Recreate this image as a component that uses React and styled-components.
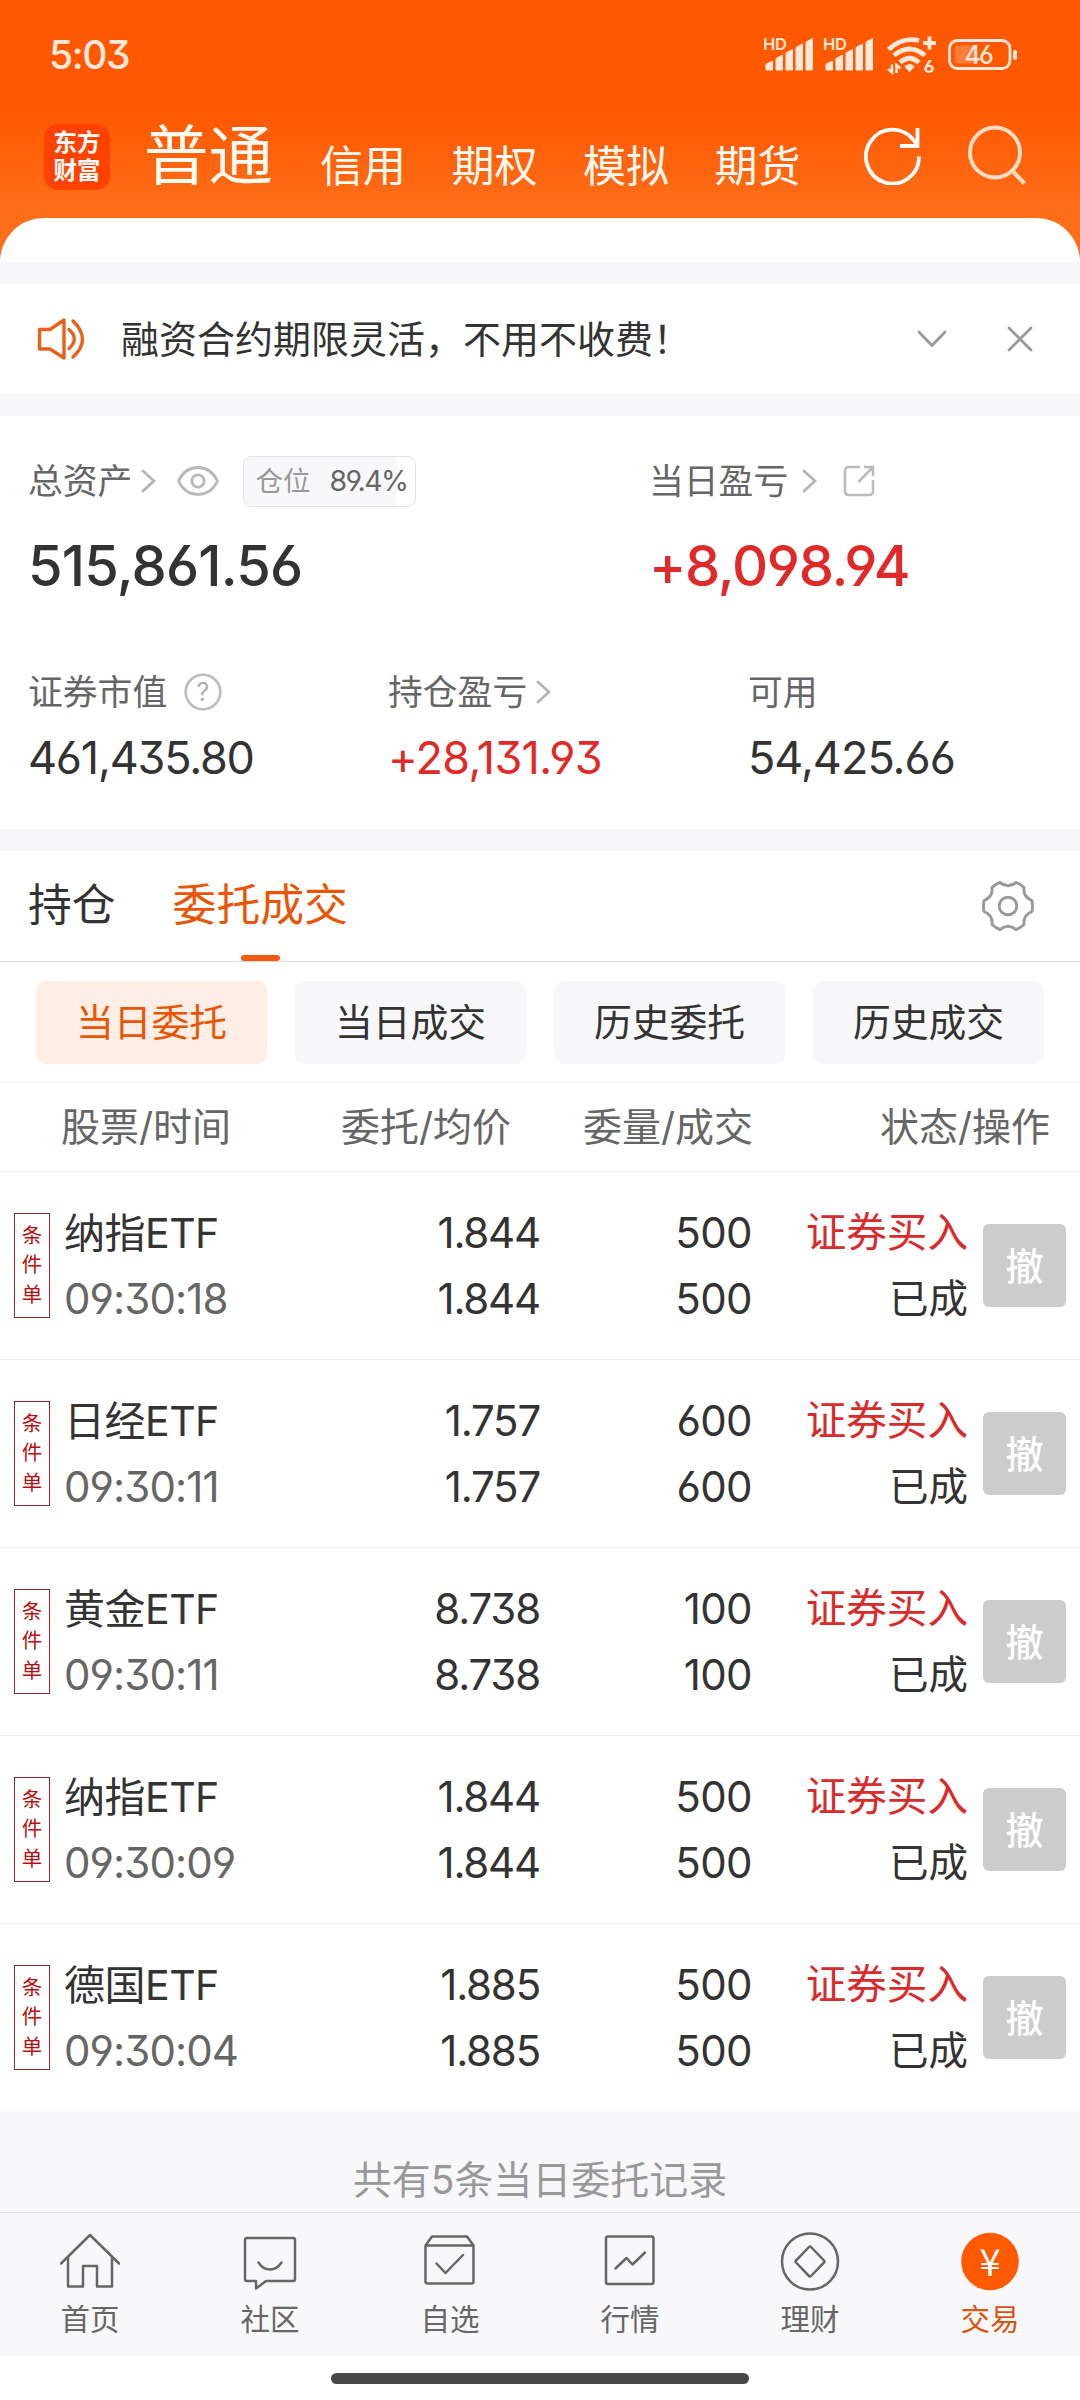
import styled, { createGlobalStyle } from "styled-components";

const GlobalStyle = createGlobalStyle`
    * {
        box-sizing: border-box;
    }
    body {
        margin: 0;
        background: #fff;
        color: #333;
        font-family: Inter, "Noto Sans CJK SC", sans-serif;
        font-feature-settings: "cv03", "cv04", "cv09";
    }
    svg {
        display: block;
        flex: none;
    }
`

const Screen = styled.div`
    width: 1080px;
    height: 2400px;
    display: flex;
    flex-direction: column;
    overflow: hidden;
    background: #f8f8fb;
`

const Header = styled.header`
    height: 262px;
    flex: none;
    display: flex;
    flex-direction: column;
    background: linear-gradient(#ff5800 0, #ff5800 110px, #ff6d18 205px, #ff7019 262px);
`

const StatusBar = styled.div`
    height: 110px;
    padding: 0 63px 0 49px;
    display: flex;
    align-items: center;
    justify-content: space-between;
    color: #ffe8d9;
`

const Clock = styled.span`
    font-size: 39px;
    font-weight: 500;
    line-height: 48px;
    letter-spacing: -1.4px;
`

const AccountBar = styled.nav`
    height: 108px;
    padding: 0 53px 0 44px;
    display: flex;
    align-items: center;
    color: #fffaf2;
`

const Logo = styled.div`
    width: 66px;
    height: 66px;
    margin: -15px 34px 0 0;
    display: flex;
    flex-direction: column;
    align-items: center;
    justify-content: center;
    border-radius: 14px;
    background: #ff4200;
    color: #fff;
    font-family: "Noto Sans CJK SC", sans-serif;
    font-size: 23.5px;
    font-weight: 700;
`

const LogoLine = styled.span`
    height: 28px;
    line-height: 25px;
`

const Account = styled.span`
    width: ${p => p.$active ? "176px" : "131.5px"};
    margin-top: ${p => p.$active ? "-17px" : "4px"};
    font-size: ${p => p.$active ? "64.5px" : "43px"};
    line-height: 70px;
    white-space: nowrap;
`

const AccountActions = styled.div`
    display: flex;
    gap: 46px;
    margin: -18px 0 0 auto;
`

const Sheet = styled.div`
    height: 44px;
    border-radius: 44px 44px 0 0;
    background: #fff;
`

const Notice = styled.section`
    height: 110px;
    flex: none;
    margin: 22px 0;
    padding: 0 47px 0 36px;
    display: flex;
    align-items: center;
    background: #fff;
`

const NoticeText = styled.p`
    flex: 1;
    margin: 0 0 0 35px;
    font-size: 38px;
    line-height: 50px;
`

const NoticeActions = styled.div`
    display: flex;
    align-items: center;
    gap: 60px;
`

const Assets = styled.section`
    height: 413px;
    flex: none;
    padding: 37px 28px 0;
    background: #fff;
`

const AssetRow = styled.div`
    display: grid;
    grid-template-columns: ${p => p.$columns};
    height: ${p => p.$height}px;
`

const AssetLabel = styled.div`
    height: 56px;
    display: flex;
    align-items: center;
    color: #666;
    font-size: 34.8px;
    line-height: 50px;
    & > svg {
        margin-left: ${p => p.$iconGap || 9}px;
    }
`

const AssetValue = styled.div`
    margin-top: ${p => p.$large ? "22px" : "3px"};
    color: ${p => p.$up ? "#e02a2a" : "#333"};
    font-size: ${p => p.$large ? "56px" : "45px"};
    font-weight: ${p => p.$large ? 500 : 400};
    line-height: 70px;
    letter-spacing: ${p => p.$spacing || 0}px;
    white-space: nowrap;
`

const PositionBadge = styled.div`
    width: 173px;
    height: 51px;
    margin-left: 24px;
    padding: 0 8px 0 11px;
    display: flex;
    align-items: center;
    justify-content: space-between;
    border: 1px solid #e3e4e6;
    border-radius: 8px;
    background: linear-gradient(90deg, #f8f8fb 89.4%, #fff 89.4%);
    font-size: 28.5px;
    letter-spacing: -1.6px;
    & > span:first-child {
        color: #999;
        font-size: 27.5px;
        letter-spacing: 0;
    }
`

const Tabs = styled.div`
    height: 111px;
    flex: none;
    margin-top: 22px;
    padding: 0 46px 0 28px;
    display: flex;
    align-items: stretch;
    border-bottom: 1px solid #dedede;
    background: #fff;
    & > svg {
        margin: 29px 0 0 auto;
    }
`

const Tab = styled.div`
    display: flex;
    flex-direction: column;
    align-items: center;
    justify-content: space-between;
    margin-right: 57px;
    padding-top: 26px;
    color: ${p => p.$active ? "#ea5504" : "#333"};
    font-size: 43.8px;
    line-height: 58px;
    &::after {
        content: "";
        width: 39px;
        height: 6px;
        border-radius: 3px;
        background: ${p => p.$active ? "#f25a10" : "transparent"};
    }
`

const Chips = styled.div`
    height: 121px;
    flex: none;
    padding: 19px 36px 0;
    display: grid;
    grid-template-columns: repeat(4, 231px);
    column-gap: 28px;
    border-bottom: 1px solid #f3f3f5;
    background: #fff;
`

const Chip = styled.div`
    height: 83px;
    border-radius: 10px;
    background: ${p => p.$active ? "#ffeee6" : "#f8f8fb"};
    color: ${p => p.$active ? "#ea5504" : "#333"};
    font-size: 37.8px;
    line-height: 82px;
    text-align: center;
`

const TableHead = styled.div`
    height: 89px;
    flex: none;
    padding-left: 61px;
    display: grid;
    grid-template-columns: 211px 239px 242px 297px;
    border-bottom: 1px solid #ececec;
    background: #fff;
    color: #666;
    font-size: 39px;
    line-height: 88px;
    text-align: right;
    & > span:first-child {
        text-align: left;
    }
`

const OrderRow = styled.div`
    height: ${p => p.$last ? "187px" : "188px"};
    flex: none;
    padding-left: 14px;
    display: grid;
    grid-template-columns: 50px 236px 240px 212px 216px 83px;
    align-items: center;
    border-bottom: ${p => p.$last ? "0" : "1px solid #ececec"};
    background: #fff;
`

const ConditionTag = styled.div`
    width: 36px;
    height: 105px;
    padding-bottom: 1px;
    display: flex;
    flex-direction: column;
    align-items: center;
    justify-content: center;
    border: 1px solid #8c2b2b;
    color: #b80d0d;
    font-size: 20.5px;
    line-height: 29.3px;
`

const Cell = styled.div`
    font-size: 42px;
    line-height: 66px;
    text-align: ${p => p.$left ? "left" : "right"};
    white-space: nowrap;
`

const StockName = styled.div`
    font-size: 41px;
    letter-spacing: -0.5px;
`

const OrderTime = styled.div`
    color: #666;
    letter-spacing: -0.9px;
`

const Price = styled.div`
    letter-spacing: -1.2px;
`

const Amount = styled.div`
    letter-spacing: -0.6px;
`

const Side = styled.div`
    color: #d92b2b;
    font-size: 40.6px;
`

const Status = styled.div`
    font-size: 39.5px;
`

const CancelButton = styled.button`
    width: 83px;
    height: 83px;
    margin-left: 15px;
    padding: 0 0 4px;
    border: 0;
    border-radius: 6px;
    background: #ccc;
    color: #fff;
    font: inherit;
    font-size: 38px;
    font-weight: 500;
`

const Summary = styled.div`
    height: 101px;
    flex: none;
    padding-top: 43px;
    color: #999;
    font-size: 39px;
    line-height: 52px;
    text-align: center;
`

const TabBar = styled.nav`
    height: 144px;
    flex: none;
    display: grid;
    grid-template-columns: repeat(6, 1fr);
    border-top: 1px solid #dfe0e2;
`

const TabBarItem = styled.div`
    display: flex;
    flex-direction: column;
    align-items: center;
    padding-top: 18px;
    color: ${p => p.$active ? "#d95410" : "#666"};
    font-size: 29.5px;
    line-height: 40px;
    & > svg {
        margin-bottom: 8px;
    }
`

const GestureArea = styled.div`
    flex: 1;
    display: flex;
    justify-content: center;
    padding-top: 17px;
    background: #fff;
    &::after {
        content: "";
        width: 418px;
        height: 11px;
        border-radius: 6px;
        background: #474747;
    }
`

const Signal = ({ x }) => (
    <g transform={`translate(${x} 0)`}>
        <text x="-1" y="20" fontSize="16.5" fontWeight="600" letterSpacing="-0.3">HD</text>
        <path d="M2 40v-5q0-1 1-1.4l5.500-2.400V40zM12 40V28.500l6.500-3.500V40zM22 40V23l6.500-3.500V40zM32 40V17.500l6.500-3.500V40zM42 40V12l6.500-3.500V40z"
            stroke="currentColor" strokeWidth="1" strokeLinejoin="round" />
    </g>
)

const StatusIcons = () => (
    <svg width="253" height="50" viewBox="0 0 253 50" fill="currentColor">
        <Signal x={0} />
        <Signal x={60} />
        <g fill="none" stroke="currentColor" strokeWidth="4.800">
            <path d="M124.500 19.500Q138 6.500 155 10.500" />
            <path d="M130 25.500Q145.500 12.500 161 25.500" />
            <path d="M136 32.500Q145.500 24 155 32.500" />
            <path d="M165.500 6.500v13M159 13h13" strokeWidth="3.800" />
            <path d="M128 34.500v8l-4-3.500M132.500 43v-8l4 3.500" strokeWidth="2.600" />
        </g>
        <path d="M141.500 36.500q4-3 8 0l-4 4.500z" stroke="currentColor" strokeWidth="1.800" strokeLinejoin="round" />
        <text x="159.500" y="42.500" fontSize="18" fontWeight="700">6</text>
        <rect x="185.500" y="10.500" width="60.500" height="28" rx="8" fill="none" stroke="currentColor" strokeWidth="2.800" />
        <rect x="191" y="15.500" width="22" height="18" rx="3" opacity="0.25" />
        <rect x="249" y="20" width="4" height="10" rx="2" />
        <text x="200.500" y="33.500" fontSize="25" fontWeight="500" letterSpacing="-1.800">46</text>
    </svg>
)

const RefreshIcon = () => (
    <svg width="58" height="60" viewBox="0 0 58 60" fill="none" stroke="#fff" strokeWidth="3.800">
        <path d="M55 31.500A26.500 27 0 1 1 49 14.500L53.500 19.500" />
        <path d="M53.500 3v18H36" />
    </svg>
)

const SearchIcon = () => (
    <svg width="59" height="60" viewBox="0 0 59 60" fill="none" stroke="#ffdcc4" strokeWidth="4">
        <circle cx="27" cy="27.500" r="25" />
        <path d="M44 45.500L56.500 58.500" />
    </svg>
)

const SpeakerIcon = () => (
    <svg width="50" height="44" viewBox="0 0 50 44" fill="none" stroke="#e8621c" strokeWidth="3.400" strokeLinecap="round" strokeLinejoin="round">
        <path d="M3.500 12.500H14L28 3V41L14 32H3.500z" />
        <path d="M33 12.500Q43.500 22 33 31.500M37 4Q56 22.500 37 40" />
    </svg>
)

const ArrowRight = () => (
    <svg width="15" height="24" viewBox="0 0 15 24" fill="none" stroke="#b5b5b5" strokeWidth="2.800" strokeLinecap="round">
        <path d="M2 2l11 10L2 22" />
    </svg>
)

const EyeIcon = () => (
    <svg width="42" height="30" viewBox="0 0 42 30" fill="none" stroke="#b8b8b8" strokeWidth="2.800" strokeLinejoin="round">
        <path d="M1.500 15Q8 1.500 21 1.500T40.500 15Q34 28.500 21 28.500T1.500 15z" />
        <circle cx="21" cy="15" r="6.200" />
    </svg>
)

const ShareIcon = () => (
    <svg width="32" height="32" viewBox="0 0 32 32" fill="none" stroke="#bcbcbc" strokeWidth="2.600">
        <path d="M17 2H6Q2 2 2 6V26Q2 30 6 30H26Q30 30 30 26V15" />
        <path d="M21 2H30V11M30 2L15.500 17" />
    </svg>
)

const HelpIcon = () => (
    <svg width="38" height="38" viewBox="0 0 38 38">
        <circle cx="19" cy="19" r="17.300" fill="none" stroke="#bdbdbd" strokeWidth="2.600" />
        <text x="19" y="28" textAnchor="middle" fontSize="25" fill="#b0b0b0">?</text>
    </svg>
)

const GearIcon = () => (
    <svg width="52" height="52" viewBox="0 0 52 52" fill="none" stroke="#999" strokeWidth="2.900" strokeLinejoin="round">
        <path d="M18 2.500Q26 9 34 2.500Q38.500 4 42 7.500Q41 17 50 20.500Q51 26 50 31.500Q41 35 42 44.500Q38.500 48 34 49.500Q26 43 18 49.500Q13.500 48 10 44.500Q11 35 2 31.500Q1 26 2 20.500Q11 17 10 7.500Q13.500 4 18 2.500z" />
        <circle cx="26" cy="26" r="8.800" />
    </svg>
)

const navIcons = {
    home: <path d="M1 32.500L30 4L59 32.500M8 26.500V55.500H23V35H37V55.500H52V26.500" />,
    community: <>
        <path d="M7 7H53Q55 7 55 9V48Q55 50 53 50H26L16 57.500V50H7Q5 50 5 48V9Q5 7 7 7z" />
        <path d="M18.500 31.500Q23 38.500 30 38.500T41.500 31.500" />
    </>,
    watchlist: <>
        <path d="M5.500 14.500L12 5.500H47L53.500 14.500V50.500Q53.500 52.500 51.500 52.500H7.500Q5.500 52.500 5.500 50.500zM5.500 14.500H53.500" />
        <path d="M16.500 32.500L25.500 42L43 24" />
    </>,
    market: <>
        <rect x="6" y="5.500" width="47.500" height="47.500" rx="2" />
        <path d="M15.500 37.500L26.500 27L32.500 33.500L45 21.500" />
    </>,
    wealth: <>
        <circle cx="30" cy="30.500" r="28" />
        <path d="M31 16L44 29.500Q45 30.500 44 31.500L31 45Q30 46 29 45L16 31.500Q15 30.500 16 29.500L29 16Q30 15 31 16z" />
    </>,
    trade: <>
        <circle cx="30" cy="30.500" r="28.800" fill="#ff5a00" stroke="none" />
        <text x="30" y="45" textAnchor="middle" fontFamily="Noto Sans CJK SC" fontSize="38" fill="#fff" stroke="none">¥</text>
    </>,
}

const NavIcon = ({ name }) => (
    <svg width="60" height="60" viewBox="0 0 60 60" fill="none" stroke="#666" strokeWidth="2.500" strokeLinecap="round" strokeLinejoin="round">
        {navIcons[name]}
    </svg>
)

const accounts = ["普通", "信用", "期权", "模拟", "期货"]
const chips = ["当日委托", "当日成交", "历史委托", "历史成交"]
const columns = ["股票/时间", "委托/均价", "委量/成交", "状态/操作"]

const orders = [
    { name: "纳指ETF", time: "09:30:18", price: "1.844", amount: 500 },
    { name: "日经ETF", time: "09:30:11", price: "1.757", amount: 600 },
    { name: "黄金ETF", time: "09:30:11", price: "8.738", amount: 100 },
    { name: "纳指ETF", time: "09:30:09", price: "1.844", amount: 500 },
    { name: "德国ETF", time: "09:30:04", price: "1.885", amount: 500 },
]

const navItems = [
    ["home", "首页"],
    ["community", "社区"],
    ["watchlist", "自选"],
    ["market", "行情"],
    ["wealth", "理财"],
    ["trade", "交易"],
]

const App = () => {
    return <Screen>
        <GlobalStyle />
        <Header>
            <StatusBar>
                <Clock>5:03</Clock>
                <StatusIcons />
            </StatusBar>
            <AccountBar>
                <Logo>
                    <LogoLine>东方</LogoLine>
                    <LogoLine>财富</LogoLine>
                </Logo>
                {accounts.map((name, i) => <Account key={name} $active={i === 0}>{name}</Account>)}
                <AccountActions>
                    <RefreshIcon />
                    <SearchIcon />
                </AccountActions>
            </AccountBar>
            <Sheet />
        </Header>

        <Notice>
            <SpeakerIcon />
            <NoticeText>融资合约期限灵活，不用不收费！</NoticeText>
            <NoticeActions>
                <svg width="30" height="18" viewBox="0 0 30 18" fill="none" stroke="#999" strokeWidth="2.800" strokeLinecap="round">
                    <path d="M2 2l13 13.500L28 2" />
                </svg>
                <svg width="26" height="26" viewBox="0 0 26 26" fill="none" stroke="#999" strokeWidth="2.800" strokeLinecap="round">
                    <path d="M2 2l22 22M24 2L2 24" />
                </svg>
            </NoticeActions>
        </Notice>

        <Assets>
            <AssetRow $columns="621px 1fr" $height={211}>
                <div>
                    <AssetLabel>
                        总资产
                        <ArrowRight />
                        <AssetLabel as="span" $iconGap={21}><EyeIcon /></AssetLabel>
                        <PositionBadge><span>仓位</span><span>89.4%</span></PositionBadge>
                    </AssetLabel>
                    <AssetValue $large $spacing={-0.8}>515,861.56</AssetValue>
                </div>
                <div>
                    <AssetLabel $iconGap={14}>
                        当日盈亏
                        <ArrowRight />
                        <AssetLabel as="span" $iconGap={26}><ShareIcon /></AssetLabel>
                    </AssetLabel>
                    <AssetValue $large $up $spacing={-1.3}>+8,098.94</AssetValue>
                </div>
            </AssetRow>
            <AssetRow $columns="360px 360px 1fr" $height={140}>
                <div>
                    <AssetLabel $iconGap={17}>证券市值<HelpIcon /></AssetLabel>
                    <AssetValue $spacing={-1.2}>461,435.80</AssetValue>
                </div>
                <div>
                    <AssetLabel>持仓盈亏<ArrowRight /></AssetLabel>
                    <AssetValue $up $spacing={-0.7}>+28,131.93</AssetValue>
                </div>
                <div>
                    <AssetLabel>可用</AssetLabel>
                    <AssetValue $spacing={-1}>54,425.66</AssetValue>
                </div>
            </AssetRow>
        </Assets>

        <Tabs>
            <Tab>持仓</Tab>
            <Tab $active>委托成交</Tab>
            <GearIcon />
        </Tabs>
        <Chips>
            {chips.map((name, i) => <Chip key={name} $active={i === 0}>{name}</Chip>)}
        </Chips>
        <TableHead>
            {columns.map(name => <span key={name}>{name}</span>)}
        </TableHead>

        {orders.map((order, i) => (
            <OrderRow key={i} $last={i === orders.length - 1}>
                <ConditionTag><span>条</span><span>件</span><span>单</span></ConditionTag>
                <Cell $left>
                    <StockName>{order.name}</StockName>
                    <OrderTime>{order.time}</OrderTime>
                </Cell>
                <Cell>
                    <Price>{order.price}</Price>
                    <Price>{order.price}</Price>
                </Cell>
                <Cell>
                    <Amount>{order.amount}</Amount>
                    <Amount>{order.amount}</Amount>
                </Cell>
                <Cell>
                    <Side>证券买入</Side>
                    <Status>已成</Status>
                </Cell>
                <CancelButton>撤</CancelButton>
            </OrderRow>
        ))}

        <Summary>共有5条当日委托记录</Summary>
        <TabBar>
            {navItems.map(([icon, label]) => (
                <TabBarItem key={icon} $active={icon === "trade"}>
                    <NavIcon name={icon} />
                    {label}
                </TabBarItem>
            ))}
        </TabBar>
        <GestureArea />
    </Screen>
}

export default App;
